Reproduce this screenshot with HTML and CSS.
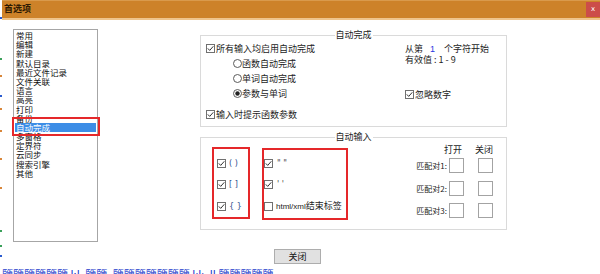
FILE: index.html
```html
<!DOCTYPE html>
<html lang="zh">
<head>
<meta charset="utf-8">
<title>首选项</title>
<link rel="stylesheet" href="styles.css">
</head>
<body>
<div class="screen">
  <div class="top">
    <div class="edge">
      <i class="dot blue d0"></i>
      <i class="dot green d1"></i>
      <i class="dot orange d2"></i>
      <i class="dot blue d3"></i>
      <i class="dot orange d4"></i>
      <i class="dot orange d5"></i>
      <i class="dot orange d6"></i>
      <i class="dot orange d7"></i>
      <i class="dot green d8"></i>
      <i class="dot green d9"></i>
      <i class="dot blue d10"></i>
    </div>
    <div class="dialog">
      <div class="titlebar">
        <span class="title">首选项</span>
        <span class="close">x</span>
      </div>
      <div class="main">
        <div class="list-wrap">
          <ul class="list">
            <li>常用</li>
            <li>编辑</li>
            <li>新建</li>
            <li>默认目录</li>
            <li>最近文件记录</li>
            <li>文件关联</li>
            <li>语言</li>
            <li>高亮</li>
            <li>打印</li>
            <li>备份</li>
            <li class="sel">自动完成</li>
            <li>多窗格</li>
            <li>定界符</li>
            <li>云同步</li>
            <li>搜索引擎</li>
            <li>其他</li>
          </ul>
          <div class="mark mark-list"></div>
        </div>
        <div class="groups">
          <div class="group g1">
            <div class="group-title">自动完成</div>
            <div class="g1-left">
              <div class="opt"><svg class="cb" viewBox="0 0 9 9"><rect x="0.5" y="0.5" width="8" height="8" fill="#fff" stroke="#707070"/><path d="M1.8 4.4 L3.7 6.4 L7.3 2.3" fill="none" stroke="#333"/></svg><span>所有输入均启用自动完成</span></div>
              <div class="radios">
                <div class="opt"><svg class="rb" viewBox="0 0 9 9"><circle cx="4.5" cy="4.5" r="4" fill="#fff" stroke="#5a5a5a"/></svg><span>函数自动完成</span></div>
                <div class="opt"><svg class="rb" viewBox="0 0 9 9"><circle cx="4.5" cy="4.5" r="4" fill="#fff" stroke="#5a5a5a"/></svg><span>单词自动完成</span></div>
                <div class="opt"><svg class="rb" viewBox="0 0 9 9"><circle cx="4.5" cy="4.5" r="4" fill="#fff" stroke="#5a5a5a"/><circle cx="4.5" cy="4.5" r="2.2" fill="#222"/></svg><span>参数与单词</span></div>
              </div>
              <div class="opt opt-last"><svg class="cb" viewBox="0 0 9 9"><rect x="0.5" y="0.5" width="8" height="8" fill="#fff" stroke="#707070"/><path d="M1.8 4.4 L3.7 6.4 L7.3 2.3" fill="none" stroke="#333"/></svg><span>输入时提示函数参数</span></div>
            </div>
            <div class="g1-right">
              <div class="line">从第<span class="num">1</span>个字符开始</div>
              <div class="line">有效值 : 1 - 9</div>
              <div class="opt opt-ignore"><svg class="cb" viewBox="0 0 9 9"><rect x="0.5" y="0.5" width="8" height="8" fill="#fff" stroke="#707070"/><path d="M1.8 4.4 L3.7 6.4 L7.3 2.3" fill="none" stroke="#333"/></svg><span>忽略数字</span></div>
            </div>
          </div>
          <div class="group g2">
            <div class="group-title">自动输入</div>
            <div class="mark rbox1">
              <div class="opt"><svg class="cb" viewBox="0 0 9 9"><rect x="0.5" y="0.5" width="8" height="8" fill="#fff" stroke="#707070"/><path d="M1.8 4.4 L3.7 6.4 L7.3 2.3" fill="none" stroke="#333"/></svg><span class="br">( )</span></div>
              <div class="opt"><svg class="cb" viewBox="0 0 9 9"><rect x="0.5" y="0.5" width="8" height="8" fill="#fff" stroke="#707070"/><path d="M1.8 4.4 L3.7 6.4 L7.3 2.3" fill="none" stroke="#333"/></svg><span class="br">[ ]</span></div>
              <div class="opt"><svg class="cb" viewBox="0 0 9 9"><rect x="0.5" y="0.5" width="8" height="8" fill="#fff" stroke="#707070"/><path d="M1.8 4.4 L3.7 6.4 L7.3 2.3" fill="none" stroke="#333"/></svg><span class="br">{ }</span></div>
            </div>
            <div class="mark rbox2">
              <div class="opt"><svg class="cb" viewBox="0 0 9 9"><rect x="0.5" y="0.5" width="8" height="8" fill="#fff" stroke="#707070"/><path d="M1.8 4.4 L3.7 6.4 L7.3 2.3" fill="none" stroke="#333"/></svg><span class="qt">" "</span></div>
              <div class="opt"><svg class="cb" viewBox="0 0 9 9"><rect x="0.5" y="0.5" width="8" height="8" fill="#fff" stroke="#707070"/><path d="M1.8 4.4 L3.7 6.4 L7.3 2.3" fill="none" stroke="#333"/></svg><span class="qt">' '</span></div>
              <div class="opt"><svg class="cb" viewBox="0 0 9 9"><rect x="0.5" y="0.5" width="8" height="8" fill="#fff" stroke="#707070"/></svg><span class="tag"><span class="lat">html/xml</span>结束标签</span></div>
            </div>
            <div class="match">
              <div class="mhead"><span class="h1">打开</span><span>关闭</span></div>
              <div class="mrow first"><span class="mlabel">匹配对1:</span><span class="mbox"></span><span class="mbox b2"></span></div>
              <div class="mrow"><span class="mlabel">匹配对2:</span><span class="mbox"></span><span class="mbox b2"></span></div>
              <div class="mrow"><span class="mlabel">匹配对3:</span><span class="mbox"></span><span class="mbox b2"></span></div>
            </div>
          </div>
        </div>
      </div>
      <div class="footer"><button class="btn" type="button">关闭</button></div>
    </div>
  </div>
  <div class="strip">鹽鹽鹽鹽鹽鹽 l:l. 鹽鹽. 鹽鹽鹽鹽鹽鹽鹽 lılı. ll 鹽鹽鹽鹽鹽</div>
</div>
</body>
</html>
```
FILE: styles.css
```css
* { box-sizing: border-box; }
html, body { margin: 0; padding: 0; background: #fff; }
body {
  font-family: "Noto Sans CJK SC", "Noto Sans", sans-serif;
  font-size: 9px;
  color: #1c1c1c;
}
.screen { width: 600px; height: 274px; overflow: hidden; }
.top { display: flex; height: 268px; }

.edge { width: 2px; display: flex; flex-direction: column; }
.dot { display: block; width: 2px; height: 2px; }
.dot.blue { background: #2a5bd0; }
.dot.green { background: #3aa05a; }
.dot.orange { background: #d8863a; }
.d0 { margin-top: 17px; }
.d1 { margin-top: 39px; }
.d2 { margin-top: 15px; }
.d3 { margin-top: 18px; }
.d4 { margin-top: 11px; }
.d5 { margin-top: 20px; }
.d6 { margin-top: 26px; }
.d7 { margin-top: 27px; }
.d8 { margin-top: 41px; }
.d9 { margin-top: 13px; }
.d10 { margin-top: 8px; }

.dialog { width: 598px; display: flex; flex-direction: column; }

.titlebar {
  height: 20px;
  background: #cd8229;
  border-top: 1px solid #d99a4c;
  border-bottom: 2px solid #efc48c;
  display: flex;
  align-items: flex-start;
}
.title {
  padding-left: 2px;
  line-height: 16px;
  font-size: 9px;
  font-weight: 700;
  color: #2e1a02;
}
.close {
  margin-left: auto;
  margin-top: 1px;
  width: 14px;
  height: 15px;
  background: #cc4d49;
  color: #fff;
  font-family: "DejaVu Sans", sans-serif;
  font-size: 7px;
  line-height: 15px;
  text-align: center;
}

.main { display: flex; align-items: flex-start; height: 223px; }

.list-wrap { position: relative; margin: 9px 0 0 11px; }
.list {
  list-style: none;
  margin: 0;
  width: 85px;
  height: 213px;
  border: 1px solid #a6a6a6;
  padding: 1px;
  font-size: 8.5px;
}
.list li {
  height: 9.2px;
  line-height: 9.2px;
  padding-left: 1px;
  white-space: nowrap;
  color: #111;
}
.list li.sel { background: #3c8de6; color: #fff; }

.mark { border: 2px solid #e5282a; }
.mark-list {
  position: absolute;
  left: -1px;
  top: 88px;
  width: 88px;
  height: 19px;
}

.groups { margin: 15px 0 0 102px; width: 307px; display: flex; flex-direction: column; }
.group { position: relative; border: 1px solid #dadada; }
.group-title {
  position: absolute;
  top: -7px;
  left: 50%;
  transform: translateX(-50%);
  background: #fff;
  padding: 0 1px;
  line-height: 11px;
  white-space: nowrap;
  color: #222;
}

.opt { display: flex; align-items: center; height: 11px; line-height: 11px; white-space: nowrap; }
.cb { width: 9px; height: 9px; flex: none; margin-right: 1px; }
.rb { width: 9px; height: 9px; flex: none; margin-right: 0; }

.g1 { height: 92px; display: flex; padding: 7px 0 0 5px; }
.g1-left { width: 199px; display: flex; flex-direction: column; }
.radios { margin: 4px 0 0 27px; display: flex; flex-direction: column; gap: 4px; }
.opt-last { margin-top: 10px; }
.g1-right { display: flex; flex-direction: column; }
.line { height: 11px; line-height: 11px; white-space: nowrap; }
.num { color: #2a36e0; margin: 0 9px 0 7px; font-family: "Liberation Sans", sans-serif; }
.opt-ignore { margin-top: 24px; }

.g2 { height: 93px; margin-top: 10px; display: flex; align-items: flex-start; padding-left: 11px; }
.rbox1 {
  margin-top: 9px;
  width: 38px;
  height: 72px;
  padding: 8.5px 0 0 3px;
  display: flex;
  flex-direction: column;
  gap: 10.5px;
}
.rbox2 {
  margin: 10px 0 0 12px;
  width: 86px;
  height: 72px;
  padding: 7.5px 0 0 0;
  display: flex;
  flex-direction: column;
  gap: 10.5px;
}
.br { color: #2f4f8c; margin-left: 2px; font-family: "DejaVu Sans", sans-serif; font-size: 8px; }
.qt { color: #444; margin-left: 3px; font-family: "DejaVu Sans", sans-serif; font-size: 8px; }
.tag { margin-left: 2px; color: #222; }
.lat { font-family: "Liberation Sans", sans-serif; font-size: 8px; }

.match { margin: 6px 13px 0 auto; width: 78px; display: flex; flex-direction: column; }
.mhead { height: 11px; line-height: 11px; display: flex; padding-left: 29px; white-space: nowrap; }
.mhead .h1 { width: 31px; }
.mrow { display: flex; align-items: center; height: 15px; margin-top: 7.5px; }
.mrow.first { margin-top: 3px; }
.mlabel { width: 32px; text-align: right; white-space: nowrap; font-size: 8px; color: #222; }
.mbox { width: 15px; height: 15px; border: 1px solid #a3a3a3; background: #fff; margin-left: 2px; }
.mbox.b2 { margin-left: 14px; }

.footer { margin-top: 6px; padding-left: 272px; }
.btn {
  width: 47px;
  height: 15px;
  padding: 0;
  margin: 0;
  background: #e1e1e1;
  border: 1px solid #adadad;
  border-radius: 0;
  font-family: "Noto Sans CJK SC", sans-serif;
  font-size: 9px;
  line-height: 13px;
  color: #111;
}

.strip {
  height: 6px;
  overflow: hidden;
  padding: 1px 0 0 2px;
  font-size: 11px;
  line-height: 11px;
  color: #1d3ccc;
  white-space: nowrap;
}
```
